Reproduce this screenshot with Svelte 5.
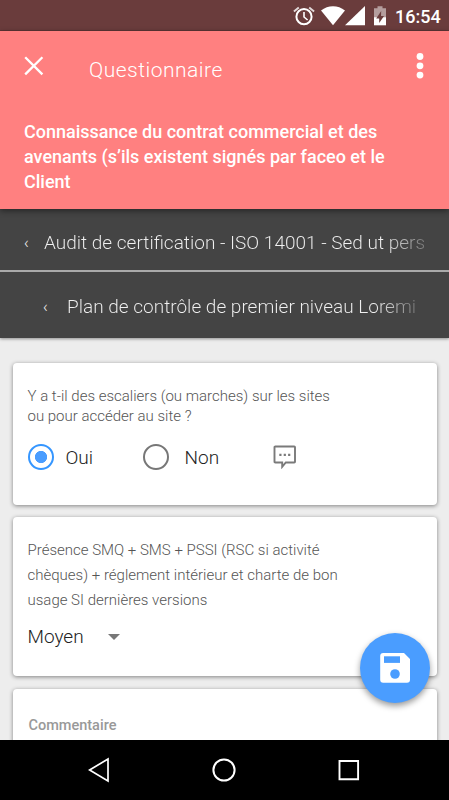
<script lang="ts">
	let answer = $state('Oui');

	const crumbs = [
		{ label: 'Audit de certification - ISO 14001 - Sed ut pers', level: 1 },
		{ label: 'Plan de contrôle de premier niveau Loremi', level: 2 },
	];
	const options = ['Oui', 'Non'];
</script>

<div class="screen">
	<div class="status-bar">
		<svg class="alarm" width="22" height="20" viewBox="0 0 22 20" fill="none" stroke="#fff">
			<circle cx="11" cy="10.7" r="7.6" stroke-width="2" />
			<path d="M11 6v5l3.6 3" stroke-width="1.6" />
			<path d="M.9 5.5L5.8 1.4M21.1 5.5L16.2 1.4" stroke-width="1.9" opacity="0.8" />
		</svg>
		<svg class="wifi" width="24" height="20" viewBox="0 0 24 20" fill="#fff">
			<path d="M0 4.5C7-1.3 17-1.3 24 4.5L12 19.2z" />
		</svg>
		<svg class="signal" width="20" height="20" viewBox="0 0 20 20" fill="#fff">
			<path d="M0 19.2L20 0v19.2z" />
		</svg>
		<svg class="battery" width="12" height="20" viewBox="0 0 12 20">
			<path d="M0 2.3h3.5V.3h5v2H12V12H0z" fill="#b49d9d" />
			<path d="M0 11.3h12v8H0z" fill="#fff" />
			<path d="M7.2 5L2.2 12.5h3V17l4.8-7H7z" fill="#6a3c3c" />
		</svg>
		<span class="time">16:54</span>
	</div>

	<header class="header">
		<div class="toolbar">
			<button class="icon-btn close" aria-label="Fermer">
				<svg width="20" height="20" viewBox="0 0 20 20" fill="none" stroke="#fff" stroke-width="2.3">
					<path d="M1.2 1.2l17.2 17.2M18.4 1.2L1.2 18.4" />
				</svg>
			</button>
			<h1 class="title">Questionnaire</h1>
			<button class="icon-btn" aria-label="Menu">
				<svg width="8" height="28" viewBox="0 0 8 28" fill="#fff">
					<circle cx="4" cy="4.5" r="3.4" />
					<circle cx="4" cy="13.8" r="3.4" />
					<circle cx="4" cy="23.1" r="3.4" />
				</svg>
			</button>
		</div>
		<h2 class="subject">
			<span class="s1">Connaissance du contrat commercial et des</span><br />
			<span class="s2">avenants (s’ils existent signés par faceo et le</span><br />
			<span class="s3">Client</span>
		</h2>
	</header>

	<nav class="crumbs">
		{#each crumbs as crumb}
			<div class="crumb level-{crumb.level}">
				<span class="chevron">‹</span>
				<span class="crumb-label">{crumb.label}</span>
			</div>
		{/each}
	</nav>

	<main class="content">
		<section class="card card-choice">
			<p class="question">Y a t-il des escaliers (ou marches) sur les sites<br />ou pour accéder au site ?</p>
			<div class="choices">
				{#each options as option}
					<button class="choice" onclick={() => { answer = option; }}>
						<span class="radio" class:checked={answer === option}></span>
						<span>{option}</span>
					</button>
				{/each}
				<svg class="comment" width="24" height="24" viewBox="0 0 24 24" fill="none" stroke="#7a7a7a">
					<path d="M2.3 1.5h18.9q.8 0 .8.8v14.4q0 .8-.8.8h-8.4L9.2 21.8v-4.3H2.3q-.8 0-.8-.8V2.3q0-.8.8-.8z" stroke-width="1.9" />
					<path d="M6.3 9.8h2.2M10.7 9.8h2.2M15.1 9.8h2.2" stroke-width="2.2" />
				</svg>
			</div>
		</section>

		<section class="card card-select">
			<p class="question">Présence SMQ + SMS + PSSI (RSC si activité<br />chèques) + réglement intérieur et charte de bon<br />usage SI dernières versions</p>
			<button class="select">
				<span>Moyen</span>
				<svg width="12" height="6" viewBox="0 0 12 6" fill="#777"><path d="M0 0h12L6 6z" /></svg>
			</button>
		</section>

		<section class="card card-comment">
			<span class="placeholder">Commentaire</span>
		</section>
	</main>

	<button class="fab" aria-label="Enregistrer">
		<svg width="30" height="30" viewBox="0 0 30 30">
			<path d="M3.2 0H24l6 6v20.8a3 3 0 0 1-3 3H3.2a3 3 0 0 1-3-3V3a3 3 0 0 1 3-3z" fill="#fff" />
			<path d="M4 3.3h16v6.6H4z" fill="#4a9dff" />
			<circle cx="15" cy="21" r="4.8" fill="#4a9dff" />
		</svg>
	</button>

	<footer class="nav-bar">
		<svg width="22" height="26" viewBox="0 0 22 26" fill="none" stroke="#fff" stroke-width="1.7">
			<path d="M1.6 13L20 2v22z" />
		</svg>
		<svg width="24" height="26" viewBox="0 0 24 26" fill="none" stroke="#fff" stroke-width="2">
			<circle cx="12" cy="13" r="10.6" />
		</svg>
		<svg width="22" height="26" viewBox="0 0 22 26" fill="none" stroke="#fff" stroke-width="1.9">
			<path d="M1.5 4h18.6v18.2H1.5z" />
		</svg>
	</footer>
</div>

<style>
	:global(body) {
		margin: 0;
	}

	.screen {
		position: relative;
		display: flex;
		flex-direction: column;
		width: 449px;
		height: 800px;
		overflow: hidden;
		background: #ededed;
		font-family: Roboto, 'Noto Sans', sans-serif;
	}

	button {
		padding: 0;
		border: 0;
		background: none;
		font: inherit;
		color: inherit;
		display: flex;
		align-items: center;
		cursor: pointer;
	}

	h1,
	h2,
	p {
		margin: 0;
	}

	/* Status bar */
	.status-bar {
		box-sizing: border-box;
		flex: none;
		display: flex;
		align-items: flex-start;
		height: 31px;
		padding: 6px 0 0 293px;
		background: #6a3c3c;
		border-bottom: 1px solid #5d3434;
	}

	.wifi { margin-left: 6px; }
	.signal { margin-left: 0; }
	.battery { margin-left: 9px; }

	.time {
		margin-left: 9px;
		font-size: 18px;
		line-height: 21px;
		font-weight: 500;
		color: #fff;
	}

	/* Header */
	.header {
		position: relative;
		z-index: 2;
		box-sizing: border-box;
		flex: none;
		height: 178px;
		background: #ff8080;
		color: #fff;
		box-shadow: 0 2px 6px rgba(0, 0, 0, 0.45);
	}

	.toolbar {
		display: flex;
		align-items: center;
		height: 69px;
		padding: 0 25px 0 24px;
	}

	.close {
		margin-bottom: 0;
	}

	.title {
		flex: 1;
		margin: 8px 0 0 45px;
		font-size: 21px;
		font-weight: 300;
		letter-spacing: 0.5px;
	}

	.subject {
		padding: 19px 0 0 24px;
		font-size: 18px;
		line-height: 25px;
		font-weight: 500;
		white-space: nowrap;
	}

	/* Breadcrumbs */
	.crumbs {
		position: relative;
		z-index: 1;
		flex: none;
		background: #444;
		color: #f0f0f0;
		box-shadow: 0 1px 3px rgba(0, 0, 0, 0.4);
	}

	.crumb {
		box-sizing: border-box;
		display: flex;
		align-items: center;
		font-size: 19px;
		font-weight: 300;
		white-space: nowrap;
	}

	.level-1 {
		height: 63px;
		padding: 6px 0 0 24px;
		border-bottom: 2px solid #aaa;
	}

	.level-2 {
		height: 66px;
		padding: 2px 0 0 43px;
	}

	.chevron {
		width: 20px;
		font-size: 16px;
	}

	.level-2 .chevron { width: 24px; }

	.crumb-label {
		background: linear-gradient(90deg, #f0f0f0 calc(100% - 42px), #777);
		background-clip: text;
		color: transparent;
	}

	/* Cards */
	.content {
		flex: 1;
		min-height: 0;
		display: flex;
		flex-direction: column;
		gap: 12px;
		padding: 25px 12.5px 0;
		overflow: hidden;
	}

	.card {
		box-sizing: border-box;
		flex: none;
		padding: 0 15px;
		border-radius: 4px;
		background: #fff;
		box-shadow: 0 1px 4px rgba(0, 0, 0, 0.45);
	}

	.card-choice {
		height: 142px;
		padding-top: 23px;
	}

	.card-select {
		height: 159px;
		padding-top: 21px;
	}

	.card-comment {
		height: 120px;
		margin-top: 1px;
		padding: 26px 16px;
	}

	.question {
		font-size: 15px;
		line-height: 20px;
		font-weight: 300;
		color: #555;
		white-space: nowrap;
	}

	.card-select .question { line-height: 25px; }

	.choices {
		display: flex;
		align-items: center;
		height: 30px;
		margin-top: 16px;
		font-size: 19px;
		font-weight: 300;
		color: #222;
	}

	.choice {
		width: 115px;
		gap: 12px;
	}

	.choice + .choice {
		width: 130px;
		gap: 16px;
	}

	.radio {
		box-sizing: border-box;
		width: 26px;
		height: 26px;
		border: 2.4px solid #777;
		border-radius: 50%;
	}

	.radio.checked {
		border-color: #3596ff;
		background: radial-gradient(circle, #4a9dff 5.8px, #fff 6.4px);
	}

	.select {
		gap: 24px;
		margin-top: 12px;
		font-size: 19px;
		font-weight: 300;
		color: #222;
	}

	.placeholder {
		font-size: 14.5px;
		line-height: 18px;
		font-weight: 500;
		color: #999;
	}

	/* Floating save button, over the cards */
	.fab {
		position: absolute;
		left: 360px;
		top: 633px;
		justify-content: center;
		width: 70px;
		height: 70px;
		border-radius: 50%;
		background: #4a9dff;
		box-shadow: 0 3px 6px rgba(0, 0, 0, 0.4);
	}

	/* Android navigation */
	.nav-bar {
		position: relative;
		flex: none;
		display: flex;
		align-items: center;
		justify-content: space-between;
		height: 60px;
		padding: 0 89px 0 88px;
		background: #000;
	}
</style>
